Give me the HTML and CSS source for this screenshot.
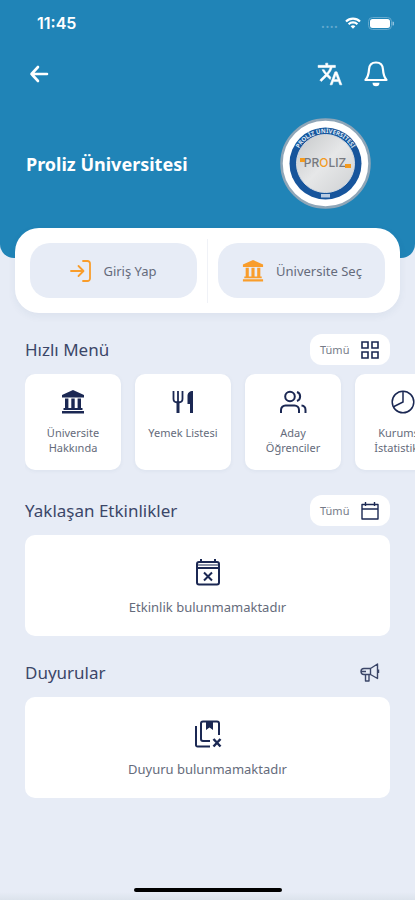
FILE: index.html
```html
<!DOCTYPE html>
<html lang="tr">
<head>
    <meta charset="UTF-8">
    <meta name="viewport" content="width=device-width, initial-scale=1.0">
    <title>Proliz Üniversitesi</title>
    <link rel="stylesheet" href="styles.css">
</head>
<body>
    <svg class="defs" width="0" height="0" aria-hidden="true">
        <symbol id="bank" viewBox="0 0 24 24">
            <path fill="currentColor" d="M12 0L1 5v2.500h22V5zM4 8.500h3.400V18H4zM10.300 8.500h3.400V18h-3.400zM16.600 8.500H20V18h-3.400zM2.500 18h19v2h-19zM1 21h22v2.500H1z"/>
        </symbol>
    </svg>

    <header class="header">
        <div class="status-bar">
            <span class="time">11:45</span>
            <div class="status-icons">
                <span class="signal">····</span>
                <svg width="16" height="12" viewBox="0 0 16 12" fill="none" stroke="#fff" stroke-width="2.200">
                    <path d="M1 4.500a10 10 0 0 1 14 0M3.600 7.200a6.300 6.300 0 0 1 8.800 0"/>
                    <path d="M8 11.800L5.600 9.300a3.500 3.500 0 0 1 4.800 0z" fill="#fff" stroke="none"/>
                </svg>
                <svg width="26" height="13" viewBox="0 0 26 13">
                    <rect x="0.500" y="0.500" width="23" height="12" rx="4" fill="none" stroke="#63a9ce"/>
                    <rect x="2" y="2" width="20" height="9" rx="2.500" fill="#fff"/>
                    <path d="M24.500 4.500v4a2 2 0 0 0 0-4z" fill="#8fc1de"/>
                </svg>
            </div>
        </div>

        <nav class="toolbar">
            <button class="icon-btn" aria-label="Geri">
                <svg width="20" height="18" viewBox="0 0 20 18" fill="none" stroke="#fff" stroke-width="2.600" stroke-linecap="round" stroke-linejoin="round">
                    <path d="M18 9H2.500M9 2L2.500 9 9 16"/>
                </svg>
            </button>
            <div class="toolbar-right">
                <button class="icon-btn" aria-label="Dil">
                    <svg width="26" height="26" viewBox="0 0 24 24" fill="#fff">
                        <path d="M12.870 15.070l-2.540-2.510.030-.030A17.520 17.520 0 0 0 14.070 6H17V4h-7V2H8v2H1v2h11.170C11.500 7.920 10.440 9.750 9 11.350 8.070 10.320 7.300 9.190 6.690 8h-2c.730 1.630 1.730 3.170 2.980 4.560l-5.090 5.020L4 19l5-5 3.110 3.110.760-2.040zM18.500 10h-2L12 22h2l1.120-3h4.750L21 22h2l-4.500-12zm-2.620 7l1.620-4.330L19.120 17h-3.240z" stroke="#fff" stroke-width=".5"/>
                    </svg>
                </button>
                <button class="icon-btn" aria-label="Bildirimler">
                    <svg width="24" height="28" viewBox="0 0 24 28" fill="none" stroke="#fff" stroke-width="2.200" stroke-linejoin="round">
                        <path d="M12 2.500C7.500 2.500 5.200 5.500 5 9.500c-.3 6-1.500 8-3.500 10.500h21C20.500 17.500 19.300 15.500 19 9.500c-.2-4-2.500-7-7-7z"/>
                        <path d="M8.500 22.800h7a3.500 3.500 0 0 1-7 0z" fill="#fff" stroke="none"/>
                    </svg>
                </button>
            </div>
        </nav>

        <div class="hero">
            <h1>Proliz Üniversitesi</h1>
            <svg class="logo" viewBox="0 0 91 91">
                <defs>
                    <linearGradient id="silver" x1="0" y1="0" x2="1" y2="1">
                        <stop offset="0" stop-color="#c6c8ca"/>
                        <stop offset=".5" stop-color="#e6e7e8"/>
                        <stop offset="1" stop-color="#cfd1d3"/>
                    </linearGradient>
                    <path id="arc" d="M15 45.500a30.500 30.500 0 0 1 61 0"/>
                </defs>
                <circle cx="45.500" cy="45.500" r="44" fill="#fff" stroke="#8fa6b8" stroke-width="2.500"/>
                <circle cx="45.500" cy="45.500" r="36" fill="#17559c"/>
                <circle cx="45.500" cy="45.500" r="29" fill="url(#silver)" stroke="#d5dbe2"/>
                <text class="logo-ring"><textPath href="#arc" startOffset="50%">PROLİZ ÜNİVERSİTESİ</textPath></text>
                <text class="logo-name" x="45" y="49">PR<tspan fill="#f39a1e">O</tspan>LIZ</text>
                <path d="M20 40h5v4h-5zM65 46h6v4h-6z" fill="#f39a1e"/>
                <path d="M41 76h9v3.500h-9z" fill="#b8cbe2"/>
            </svg>
        </div>
    </header>

    <div class="actions">
        <button class="action-btn">
            <svg width="22" height="22" viewBox="0 0 22 22" fill="none" stroke="#f99d2b" stroke-width="1.800" stroke-linecap="round" stroke-linejoin="round">
                <path d="M1 11h12M8.500 6l5 5-5 5M13 1h4.500A2.500 2.500 0 0 1 20 3.500v15a2.500 2.500 0 0 1-2.500 2.500H13"/>
            </svg>
            Giriş Yap
        </button>
        <span class="divider"></span>
        <button class="action-btn">
            <svg class="orange" width="24" height="22"><use href="#bank"/></svg>
            Üniversite Seç
        </button>
    </div>

    <main>
        <section>
            <div class="section-head">
                <h2>Hızlı Menü</h2>
                <button class="chip">
                    Tümü
                    <svg width="18" height="18" viewBox="0 0 18 18" fill="none" stroke="#1b2853" stroke-width="1.600">
                        <path d="M1 1h6v6H1zM11 1h6v6h-6zM1 11h6v6H1zM11 11h6v6h-6z"/>
                    </svg>
                </button>
            </div>
            <div class="menu">
                <a class="menu-card" href="#">
                    <svg width="26" height="24"><use href="#bank"/></svg>
                    <span>Üniversite Hakkında</span>
                </a>
                <a class="menu-card" href="#">
                    <svg width="26" height="24" viewBox="0 0 26 24" fill="none" stroke="currentColor">
                        <path d="M3.500 1v8c0 2.500 1.500 3.500 4.500 3.500s4.500-1 4.500-3.500V1M8 1v12" stroke-width="1.800"/>
                        <path d="M8 11v12" stroke-width="3"/>
                        <path d="M23 1v22h-3v-9h-2.500V6c0-3 2-5 5.500-5z" fill="currentColor" stroke="none"/>
                    </svg>
                    <span>Yemek Listesi</span>
                </a>
                <a class="menu-card" href="#">
                    <svg width="28" height="24" viewBox="0 0 28 24" fill="none" stroke="currentColor" stroke-width="2">
                        <circle cx="11" cy="6.500" r="4.800"/>
                        <path d="M2 23v-3a4.500 4.500 0 0 1 4.500-4.500h9A4.500 4.500 0 0 1 20 20v3M18 2a4.800 4.800 0 0 1 0 9M22.500 15.500A4.500 4.500 0 0 1 26.500 20v3"/>
                    </svg>
                    <span>Aday Öğrenciler</span>
                </a>
                <a class="menu-card" href="#">
                    <svg width="24" height="24" viewBox="0 0 24 24" fill="none" stroke="currentColor" stroke-width="1.500">
                        <circle cx="12" cy="12" r="10.800"/>
                        <path d="M12 1v11L2 17"/>
                    </svg>
                    <span>Kurumsal İstatistikler</span>
                </a>
            </div>
        </section>

        <section>
            <div class="section-head">
                <h2>Yaklaşan Etkinlikler</h2>
                <button class="chip">
                    Tümü
                    <svg width="18" height="20" viewBox="0 0 18 20" fill="none" stroke="#1b2853" stroke-width="1.400" stroke-linejoin="round">
                        <path d="M1 3.500h16V18H1zM1 8h16M4.500 1v4M13.500 1v4"/>
                    </svg>
                </button>
            </div>
            <div class="empty-card">
                <svg width="26" height="28" viewBox="0 0 26 28" fill="none" stroke="currentColor" stroke-width="2" stroke-linejoin="round">
                    <rect x="2" y="4" width="22" height="22.500" rx="2"/>
                    <path d="M2 7h22" stroke-width="1"/>
                    <path d="M2 10h22M6 1v3M20 1v3M9 14.500l8 8M17 14.500l-8 8"/>
                </svg>
                <p>Etkinlik bulunmamaktadır</p>
            </div>
        </section>

        <section>
            <div class="section-head">
                <h2>Duyurular</h2>
                <button class="icon-btn announce" aria-label="Duyurular">
                    <svg width="20" height="20" viewBox="0 0 20 20" fill="none" stroke="#3b4668" stroke-width="1.400" stroke-linejoin="round">
                        <path d="M4 5.500h6.500L17.500 1v14.500L10.500 11.500H4a3 3 0 0 1 0-6zM10.500 5.500v6M5.500 11.500v6.500H9v-6.500M1 8.500h5M18.500 6.500v3.500"/>
                    </svg>
                </button>
            </div>
            <div class="empty-card">
                <svg width="28" height="28" viewBox="0 0 28 28" fill="none" stroke="currentColor" stroke-width="2" stroke-linejoin="round">
                    <path d="M2 6v19a1.500 1.500 0 0 0 1.500 1.500H16M16 21H9a2 2 0 0 1-2-2V3.500a2 2 0 0 1 2-2h14a2 2 0 0 1 2 2V15"/>
                    <path d="M12 1.500h7V10l-3.500-2.500L12 10z" fill="currentColor" stroke="none"/>
                    <path d="M19.500 19l7 7.500M26.500 19l-7 7.500" stroke-width="2.500"/>
                </svg>
                <p>Duyuru bulunmamaktadır</p>
            </div>
        </section>
    </main>

    <footer class="home-bar"><span></span></footer>
</body>
</html>
```
FILE: styles.css
```css
* {
    box-sizing: border-box;
}

body {
    margin: 0;
    min-height: 100vh;
    display: flex;
    flex-direction: column;
    background: #e7ecf6;
    color: #1b2853;
    font-family: 'Noto Sans', 'Open Sans', sans-serif;
}

h1, h2, p {
    margin: 0;
}

button {
    border: none;
    padding: 0;
    font-family: inherit;
    cursor: pointer;
}

svg {
    display: block;
    flex-shrink: 0;
}

.defs {
    position: absolute;
}

.header {
    background: #2084b7;
    color: white;
    padding-bottom: 49px;
    border-radius: 0 0 14px 14px;
}

.status-bar {
    display: flex;
    justify-content: space-between;
    align-items: center;
    height: 46px;
    padding: 0 21px 0 37px;
}

.time {
    font-family: Inter, sans-serif;
    font-size: 16px;
    font-weight: 600;
}

.status-icons {
    display: flex;
    align-items: center;
    gap: 7px;
}

.signal {
    color: #63a9ce;
    font-size: 16px;
    line-height: 8px;
    padding-top: 8px;
}

.toolbar {
    display: flex;
    justify-content: space-between;
    align-items: center;
    height: 56px;
    padding: 0 27px 0 29px;
}

.toolbar-right {
    display: flex;
    align-items: center;
    gap: 21px;
}

.icon-btn {
    background: none;
}

.hero {
    display: flex;
    justify-content: space-between;
    align-items: center;
    padding: 16px 44px 0 26px;
}

.hero h1 {
    font-size: 18px;
    font-weight: 700;
}

.logo {
    width: 91px;
    height: 91px;
}

.logo-ring {
    font-size: 6px;
    font-weight: 700;
    fill: #dfe9f5;
    text-anchor: middle;
}

.logo-name {
    font-family: Inter, sans-serif;
    font-size: 12px;
    font-weight: 500;
    fill: #77797f;
    text-anchor: middle;
}

.actions {
    display: flex;
    align-items: center;
    gap: 10px;
    margin: -30px 15px 0;
    padding: 15px;
    background: white;
    border-radius: 24px;
    box-shadow: 0 3px 8px rgba(40,60,110,0.06);
}

.action-btn {
    flex: 1;
    display: flex;
    align-items: center;
    justify-content: center;
    gap: 11px;
    height: 55px;
    background: #e7ecf6;
    border-radius: 20px;
    color: #656b7b;
    font-size: 13px;
    white-space: nowrap;
}

.orange {
    color: #f99d2b;
}

.divider {
    width: 1px;
    height: 64px;
    margin: -5px 0;
    background: #f0f2f7;
}

main {
    padding: 21px 25px;
}

section {
    margin-bottom: 21px;
}

.section-head {
    display: flex;
    justify-content: space-between;
    align-items: center;
    height: 31px;
    margin-bottom: 9px;
}

.section-head h2 {
    font-size: 17px;
    font-weight: 400;
    color: #3b4668;
}

.chip {
    display: flex;
    align-items: center;
    justify-content: space-between;
    width: 80px;
    height: 31px;
    padding: 0 11px 0 10px;
    background: white;
    border-radius: 12px;
    color: #767b88;
    font-size: 11px;
}

.announce {
    margin-right: 10px;
}

/* horizontal list, runs off the right edge */
.menu {
    display: flex;
    gap: 14px;
    margin-right: -25px;
    padding-bottom: 4px;
    overflow-x: auto;
    scrollbar-width: none;
}

.menu-card {
    flex: 0 0 96px;
    display: flex;
    flex-direction: column;
    align-items: center;
    gap: 11px;
    height: 96px;
    padding: 16px 12px 0;
    background: white;
    border-radius: 10px;
    box-shadow: 0 1px 4px rgba(40,60,110,0.06);
    color: #1b2853;
    font-size: 11px;
    line-height: 15px;
    text-align: center;
    text-decoration: none;
}

.menu-card span {
    color: #656b7b;
}

.empty-card {
    display: flex;
    flex-direction: column;
    align-items: center;
    gap: 12px;
    padding: 23px 10px 19px;
    background: white;
    border-radius: 10px;
}

.empty-card p {
    color: #656b7b;
    font-size: 13px;
    line-height: 19px;
}

.home-bar {
    display: flex;
    justify-content: center;
    margin-top: auto;
    padding: 8px 0;
    background: linear-gradient(#e7ecf6 60%, #dce3ec);
}

.home-bar span {
    width: 148px;
    height: 4px;
    border-radius: 2px;
    background: black;
}
```
